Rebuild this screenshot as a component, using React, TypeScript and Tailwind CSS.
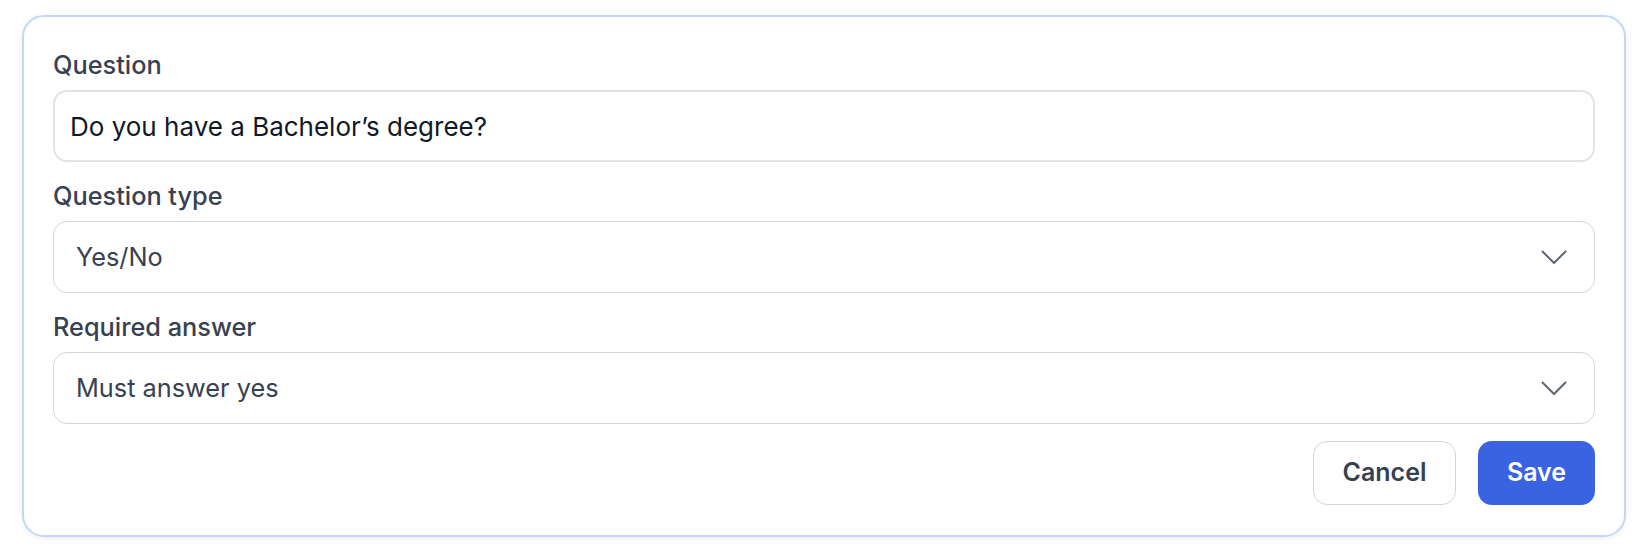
import React, { useState } from 'react';

interface SelectFieldProps {
  label: string;
  value: string;
}

const Chevron: React.FC = () => (
  <svg width="26" height="15" viewBox="0 0 26 15" fill="none" className="shrink-0">
    <path d="M1.5 1.5 L13 13 L24.5 1.5" stroke="#5f6673" strokeWidth="2" strokeLinecap="round" strokeLinejoin="round" />
  </svg>
);

const SelectField: React.FC<SelectFieldProps> = ({ label, value }) => (
  <div className="flex flex-col">
    <label className="mb-[9px] text-[25.3px] leading-[32px] font-medium text-[#374151]">{label}</label>
    <button
      type="button"
      className="flex h-[72px] w-full items-center justify-between rounded-[14px] border border-[#d4d6dd] bg-white pl-[22px] pr-[27px] text-left text-[25.3px] text-[#374151]"
    >
      <span>{value}</span>
      <Chevron />
    </button>
  </div>
);

export default function App() {
  const [question, setQuestion] = useState('Do you have a Bachelor’s degree?');

  return (
    <div className="min-h-screen bg-white px-[22px] pt-[15px] font-['Inter',sans-serif]">
      <div className="rounded-[22px] border-2 border-[#c2d8fa] bg-white px-[29px] pt-[32px] pb-[30px] shadow-[0_2px_6px_rgba(0,0,0,0.06)]">
        <div className="flex flex-col gap-[18px]">
          <div className="flex flex-col">
            <label className="mb-[9px] text-[25.3px] leading-[32px] font-medium text-[#374151]">Question</label>
            <input
              value={question}
              onChange={(e) => setQuestion(e.target.value)}
              className="h-[72px] w-full rounded-[14px] border-2 border-[#e1e3e7] bg-white px-[15px] text-[26px] text-[#111827] outline-none"
            />
          </div>
          <SelectField label="Question type" value="Yes/No" />
          <SelectField label="Required answer" value="Must answer yes" />
        </div>

        <div className="mt-[17px] flex justify-end gap-[22px]">
          <button
            type="button"
            className="h-[64px] w-[143px] rounded-[14px] border border-[#d4d6dd] bg-white text-[25px] font-semibold text-[#374151]"
          >
            Cancel
          </button>
          <button
            type="button"
            className="h-[64px] w-[117px] rounded-[14px] bg-[#3a63e2] text-[25px] font-semibold text-white"
          >
            Save
          </button>
        </div>
      </div>
    </div>
  );
}
